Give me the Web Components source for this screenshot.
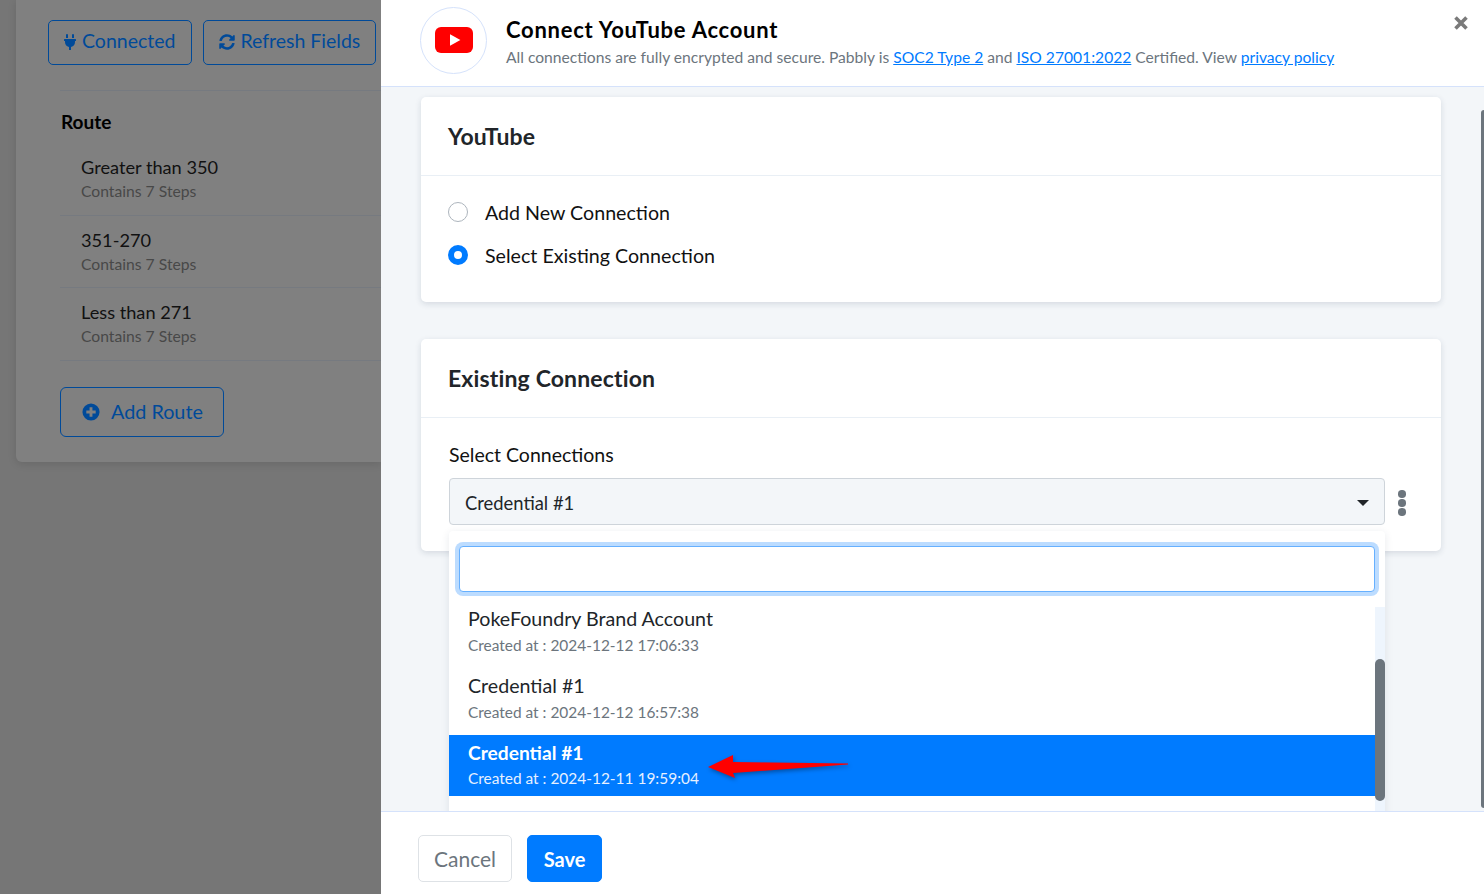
<!DOCTYPE html>
<html>
<head>
<meta charset="utf-8">
<title>Connect YouTube Account</title>
<style>
  html, body { margin: 0; padding: 0; height: 100%; overflow: hidden; }
  body { font-family: Lato, "Noto Sans", sans-serif; background: #767676; }
</style>
</head>
<body>
<x-app>
  <x-behind slot="behind">
    <x-outline-btn slot="actions" icon="plug">Connected</x-outline-btn>
    <x-outline-btn slot="actions" icon="sync">Refresh Fields</x-outline-btn>
    <x-route name="Greater than 350"></x-route>
    <x-route name="351-270"></x-route>
    <x-route name="Less than 271"></x-route>
  </x-behind>
  <x-drawer slot="drawer">
    <x-card title="YouTube">
      <div style="display:flex;flex-direction:column;gap:19px;padding:24px 0 35px">
        <x-radio>Add New Connection</x-radio>
        <x-radio checked>Select Existing Connection</x-radio>
      </div>
    </x-card>
    <x-card title="Existing Connection">
      <x-conn-select></x-conn-select>
    </x-card>
  </x-drawer>
</x-app>

<script>
const ICONS = {
  plug: '<svg viewBox="0 0 384 512" width="12" height="16"><path fill="currentColor" d="M320 32a32 32 0 0 0-64 0v96h64zm48 128H16a16 16 0 0 0-16 16v32a16 16 0 0 0 16 16h16v32a160.07 160.07 0 0 0 128 156.8V512h64v-99.2A160.07 160.07 0 0 0 352 256v-32h16a16 16 0 0 0 16-16v-32a16 16 0 0 0-16-16zM128 32a32 32 0 0 0-64 0v96h64z"/></svg>',
  sync: '<svg viewBox="0 0 512 512" width="16" height="16"><path fill="currentColor" d="M370.72 133.28C339.458 104.008 298.888 87.962 255.848 88c-77.458.068-144.328 53.178-162.791 126.85-1.344 5.363-6.122 9.15-11.651 9.15H24.103c-7.498 0-13.194-6.807-11.807-14.176C33.933 94.924 134.813 8 256 8c66.448 0 126.791 26.136 171.315 68.685L463.03 40.97C478.149 25.851 504 36.559 504 57.941V192c0 13.255-10.745 24-24 24H345.941c-21.382 0-32.09-25.851-16.971-40.971l41.75-41.749zM32 296h134.059c21.382 0 32.09 25.851 16.971 40.971l-41.75 41.75c31.262 29.273 71.835 45.319 114.876 45.28 77.418-.07 144.315-53.144 162.787-126.849 1.344-5.363 6.122-9.15 11.651-9.15h57.304c7.498 0 13.194 6.807 11.807 14.176C478.067 417.076 377.187 504 256 504c-66.448 0-126.791-26.136-171.315-68.685L48.97 471.03C33.851 486.149 8 475.441 8 454.059V320c0-13.255 10.745-24 24-24z"/></svg>',
  plus: '<svg viewBox="0 0 20 20" width="18" height="18"><circle cx="10" cy="10" r="9.5" fill="currentColor"/><path d="M10 4.8v10.4M4.8 10h10.4" stroke="#808080" stroke-width="3.2"/></svg>'
}

class XApp extends HTMLElement {
  constructor() {
    super()
    this.attachShadow({ mode: 'open' }).innerHTML = `
      <style>
        :host { display: grid; grid-template-columns: 381px 1103px; width: 1484px; height: 894px; overflow: hidden; }
      </style>
      <slot name="behind"></slot>
      <slot name="drawer"></slot>
    `
  }
}

class XBehind extends HTMLElement {
  constructor() {
    super()
    this.attachShadow({ mode: 'open' }).innerHTML = `
      <style>
        :host { display: block; padding-left: 16px; height: 894px; overflow: hidden; }
        .card {
          background: #808080; height: 462px; box-sizing: border-box; padding: 20px 0 0 32px;
          border-radius: 0 0 0 6px; box-shadow: 0 2px 8px rgba(0,0,0,.12); border-left: 0;
        }
        .actions { display: flex; gap: 11px; white-space: nowrap; }
        .inner { margin: 25px 0 0 12px; border-top: 1px solid #767a80; }
        h3 { margin: 19px 0 0 1px; font-size: 19px; line-height: 23px; font-weight: 700; color: #000; }
        .add {
          display: inline-flex; align-items: center; gap: 11px; margin-top: 26px; height: 50px; box-sizing: border-box;
          width: 164px; padding-left: 21px; border: 1px solid #004a99; border-radius: 6px; color: #004a99; font-size: 19.8px;
        }
        .add span { padding-bottom: 2px; }
        .add svg { display: block; }
      </style>
      <div class="card">
        <div class="actions"><slot name="actions"></slot></div>
        <div class="inner">
          <h3>Route</h3>
          <div style="margin-top:10px"><slot></slot></div>
          <div class="add">${ICONS.plus}<span>Add Route</span></div>
        </div>
      </div>
    `
  }
}

class XOutlineBtn extends HTMLElement {
  constructor() {
    super()
    this.attachShadow({ mode: 'open' })
  }
  connectedCallback() {
    this.shadowRoot.innerHTML = `
      <style>
        :host {
          display: inline-flex; align-items: center; gap: 6px; height: 45px; box-sizing: border-box; padding: 0 15px;
          border: 1px solid #004a99; border-radius: 5px; color: #004a99; font-size: 19.5px; flex: none;
        }
        :host([icon="plug"]) { padding-right: 16px; }
        :host([icon="sync"]) { gap: 5px; }
        svg { display: block; margin-top: -2px; }
        span { padding-bottom: 4px; }
      </style>
      ${ICONS[this.getAttribute('icon')]}<span><slot></slot></span>
    `
  }
}

class XRoute extends HTMLElement {
  constructor() {
    super()
    this.attachShadow({ mode: 'open' })
  }
  connectedCallback() {
    this.shadowRoot.innerHTML = `
      <style>
        :host { display: block; height: 72.5px; box-sizing: border-box; padding: 0 0 0 21px; border-bottom: 1px solid #767a80; }
        .n { font-size: 18.2px; line-height: 24px; color: #111; padding-top: 12px; }
        .s { font-size: 15.7px; line-height: 20px; color: #484848; margin-top: 2px; }
      </style>
      <div class="n">${this.getAttribute('name')}</div>
      <div class="s">Contains 7 Steps</div>
    `
  }
}

class XDrawer extends HTMLElement {
  constructor() {
    super()
    this.attachShadow({ mode: 'open' }).innerHTML = `
      <style>
        :host { display: flex; flex-direction: column; height: 894px; background: #f3f6f9; position: relative; }
        header {
          flex: none; height: 87px; box-sizing: border-box; background: #fff; border-bottom: 1px solid #d5e2fb;
          display: flex; align-items: center; padding: 0 0 6px 39px; gap: 19px;
        }
        .logo {
          width: 67px; height: 67px; box-sizing: border-box; border: 1px solid #d5e2fb; border-radius: 50%;
          display: flex; align-items: center; justify-content: center; flex: none;
        }
        .title { font-size: 22px; line-height: 28px; font-weight: 700; color: #000; margin-top: 2px; letter-spacing: .74px; }
        .sub { font-size: 15.63px; line-height: 20px; color: #6c757d; margin-top: 3px; }
        .sub a { color: #007bff; text-decoration: underline; }
        .close {
          position: absolute; top: 15px; right: 15px; width: 16px; height: 16px;
        }
        main { flex: 1; min-height: 0; overflow: hidden; padding: 10px 43px 0 40px; display: flex; flex-direction: column; gap: 37px; }
        footer {
          flex: none; height: 83px; box-sizing: border-box; background: #fff; border-top: 1px solid #d5e2fb;
          display: flex; gap: 15px; padding: 23px 0 0 37px; position: relative;
        }
        button {
          font: inherit; font-size: 20px; height: 47px; border-radius: 5px; box-sizing: border-box; padding: 0;
        }
        .cancel { width: 94px; background: #fff; border: 1px solid #dee2e6; color: #6c757d; font-size: 21px; }
        .save { width: 75px; background: #007bff; border: 1px solid #007bff; color: #fff; font-weight: 700; }
        .bar { position: absolute; right: 0; top: 110px; bottom: 86px; width: 3px; background: #6c757d; border-radius: 3px 0 0 3px; }
      </style>
      <header>
        <div class="logo">
          <svg width="38" height="26" viewBox="0 0 38 26">
            <rect x="0" y="0" width="38" height="26" rx="6" fill="#f00"/>
            <path d="M15 7.2 25.4 13 15 18.8z" fill="#fff"/>
          </svg>
        </div>
        <div>
          <div class="title">Connect YouTube Account</div>
          <div class="sub">All connections are fully encrypted and secure. Pabbly is <a>SOC2 Type 2</a> and <a>ISO 27001:2022</a> Certified. View <a>privacy policy</a></div>
        </div>
      </header>
      <svg class="close" viewBox="0 0 16 16"><path d="M2.5 2.5 13.5 13.5M13.5 2.5 2.5 13.5" stroke="#7a7a7a" stroke-width="3.6"/></svg>
      <main><slot></slot></main>
      <footer>
        <button class="cancel">Cancel</button>
        <button class="save">Save</button>
      </footer>
      <div class="bar"></div>
    `
  }
}

class XCard extends HTMLElement {
  constructor() {
    super()
    this.attachShadow({ mode: 'open' })
  }
  connectedCallback() {
    this.shadowRoot.innerHTML = `
      <style>
        :host { display: block; background: #fff; border-radius: 5px; box-shadow: 0 2px 6px rgba(30,50,80,.14); flex: none; }
        h2 {
          margin: 0; height: 79px; box-sizing: border-box; border-bottom: 1px solid #e9eff5; padding: 0 27px;
          font-size: 23px; font-weight: 700; line-height: 79px; color: #212529; letter-spacing: .15px;
        }
        .body { padding: 0 28px; }
      </style>
      <h2>${this.getAttribute('title')}</h2>
      <div class="body"><slot></slot></div>
    `
  }
}

class XRadio extends HTMLElement {
  constructor() {
    super()
    this.attachShadow({ mode: 'open' })
  }
  connectedCallback() {
    const on = this.hasAttribute('checked')
    this.shadowRoot.innerHTML = `
      <style>
        :host { display: flex; align-items: center; gap: 17px; height: 24px; font-size: 19.65px; color: #111; }
        i {
          display: block; width: 20px; height: 20px; border-radius: 50%; box-sizing: border-box; flex: none; margin-left: -1px;
          ${on ? 'border: 6px solid #007bff; background: #fff;' : 'border: 1px solid #adb5bd; background: #fff;'}
        }
      </style>
      <i></i><span><slot></slot></span>
    `
  }
}

class XOption extends HTMLElement {
  constructor() {
    super()
    this.attachShadow({ mode: 'open' })
  }
  connectedCallback() {
    this.shadowRoot.innerHTML = `
      <style>
        :host { display: block; box-sizing: border-box; padding: 5px 19px 0; height: 67px; color: #212529; }
        :host([selected]) { background: #007bff; color: #fff; height: 61px; }
        .n { font-size: 19.65px; line-height: 26px; }
        .d { font-size: 15.45px; line-height: 20px; color: #6c757d; margin-top: 3px; }
        :host([selected]) .n { font-weight: 700; font-size: 19.2px; }
        :host([selected]) .d { color: #e6f0ff; margin-top: 2px; }
      </style>
      <div class="n">${this.getAttribute('name')}</div>
      <div class="d">Created at : ${this.getAttribute('at')}</div>
    `
  }
}

class XConnSelect extends HTMLElement {
  constructor() {
    super()
    this.attachShadow({ mode: 'open' }).innerHTML = `
      <style>
        :host { display: block; position: relative; height: 133px; }
        label { display: block; padding-top: 24px; font-size: 19.5px; line-height: 26px; color: #111; }
        .row { display: flex; align-items: center; gap: 13px; margin-top: 10px; }
        .box {
          width: 936px; height: 47px; box-sizing: border-box; border: 1px solid #ced4da; border-radius: 4px; background: #f3f6f9;
          display: flex; align-items: center; justify-content: space-between; padding: 2px 16px 0 15px; font-size: 18.4px; color: #212529;
        }
        .caret { width: 0; height: 0; border: 6px solid transparent; border-top-color: #212529; border-bottom: 0; margin-right: -1px; }
        .kebab { display: flex; flex-direction: column; gap: 1.5px; padding-top: 3px; }
        .kebab i { display: block; width: 7.5px; height: 7.5px; border-radius: 50%; background: #6c757d; }
        .menu {
          position: absolute; left: 0; top: 113px; width: 936px; height: 300px; background: #fff; border-radius: 4px 4px 0 0;
          box-shadow: 0 2px 8px rgba(30,50,80,.1); z-index: 2;
        }
        .search {
          position: absolute; left: 10px; top: 15px; width: 916px; height: 46px; box-sizing: border-box; border: 1px solid #66b0ff;
          border-radius: 4px; background: #fff; box-shadow: 0 0 0 4px #bcdcff;
        }
        .list { position: absolute; left: 0; top: 70px; width: 926px; }
        .track { position: absolute; right: 0; top: 76px; bottom: 0; width: 10px; background: #eef5fd; }
        .thumb { position: absolute; right: 0; top: 128px; width: 10px; height: 142px; border-radius: 5px; background: #6c757d; }
        svg.arrow { position: absolute; left: 258px; top: 224px; overflow: visible; filter: drop-shadow(1px 2px 2px rgba(0,0,0,.35)); }
      </style>
      <label>Select Connections</label>
      <div class="row">
        <div class="box"><span>Credential #1</span><span class="caret"></span></div>
        <div class="kebab"><i></i><i></i><i></i></div>
      </div>
      <div class="menu">
        <div class="search"></div>
        <div class="list">
          <x-option name="PokeFoundry Brand Account" at="2024-12-12 17:06:33"></x-option>
          <x-option name="Credential #1" at="2024-12-12 16:57:38"></x-option>
          <x-option selected name="Credential #1" at="2024-12-11 19:59:04"></x-option>
        </div>
        <div class="track"></div>
        <div class="thumb"></div>
        <svg class="arrow" width="140" height="24" viewBox="0 0 140 24"><path d="M26 0 1 12 28 23 26 18 141 9.5 141 8.5 26 7z" fill="#f00"/></svg>
      </div>
    `
  }
}

customElements.define('x-app', XApp)
customElements.define('x-behind', XBehind)
customElements.define('x-outline-btn', XOutlineBtn)
customElements.define('x-route', XRoute)
customElements.define('x-drawer', XDrawer)
customElements.define('x-card', XCard)
customElements.define('x-radio', XRadio)
customElements.define('x-option', XOption)
customElements.define('x-conn-select', XConnSelect)
</script>
</body>
</html>
